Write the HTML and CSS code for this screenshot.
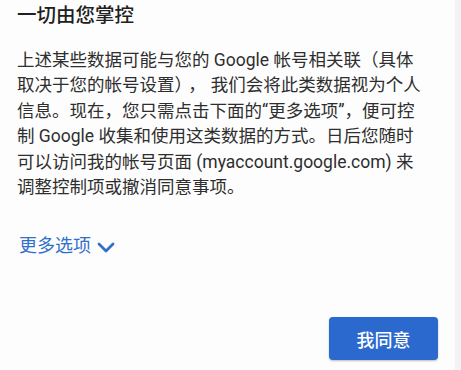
FILE: index.html
```html
<!DOCTYPE html>
<html lang="zh-CN">
<head>
<meta charset="utf-8">
<link rel="stylesheet" href="styles.css">
</head>
<body>
<div class="page">
  <main class="panel">
    <h1 class="title">一切由您掌控</h1>
    <p class="body">上述某些数据可能与您的 Google 帐号相关联（具体<br>取决于您的帐号设置）<span class="gap">，</span>我们会将此类数据视为个人<br>信息。现在，您只需点击下面的“更多选项”，便可控<br>制 Google 收集和使用这类数据的方式。日后您随时<br>可以访问我的帐号页面 (myaccount.google.com) 来<br>调整控制项或撤消同意事项。</p>
    <a class="more" href="#">更多选项
      <svg class="chev" width="18" height="11" viewBox="0 0 18 11"><path d="M2 2 L9 9 L16 2" fill="none" stroke="currentColor" stroke-width="2.8" stroke-linecap="round" stroke-linejoin="round"/></svg>
    </a>
    <button class="agree" type="button">我同意</button>
  </main>
  <div class="strip"></div>
</div>
</body>
</html>
```

FILE: styles.css
```css
html, body {
  margin: 0;
  padding: 0;
  background: #fdfdfd;
}
.page {
  display: flex;
  width: 461px;
  height: 370px;
  overflow: hidden;
  font-family: Roboto, "Noto Sans CJK SC", sans-serif;
}
.panel {
  flex: 1;
  display: flex;
  flex-direction: column;
  align-items: flex-start;
  padding: 3px 17px 0 17px;
  background: #fdfdfd;
}
.strip {
  width: 6px;
  background: #f3f3f3;
}
.title {
  margin: 0;
  font-size: 19.5px;
  line-height: 26px;
  font-weight: 500;
  color: #202020;
}
.body {
  margin: 19px 0 0 0;
  font-size: 17.5px;
  line-height: 25.4px;
  color: #2e2e2e;
  white-space: nowrap;
}
.gap {
  margin: 0 5px;
}
.more {
  margin-top: 34px;
  margin-left: 2px;
  display: flex;
  align-items: center;
  gap: 6px;
  font-size: 18px;
  line-height: 24px;
  color: #3170c9;
  text-decoration: none;
}
.chev {
  display: block;
  margin-top: 2px;
}
.agree {
  align-self: flex-end;
  margin-top: 59px;
  width: 109px;
  height: 43px;
  border: none;
  border-radius: 4px;
  background: #2c69cf;
  color: #ffffff;
  font-family: Roboto, "Noto Sans CJK SC", sans-serif;
  font-size: 18px;
  font-weight: 500;
  box-shadow: 0 1px 2px rgba(0,0,0,0.25);
}
```
